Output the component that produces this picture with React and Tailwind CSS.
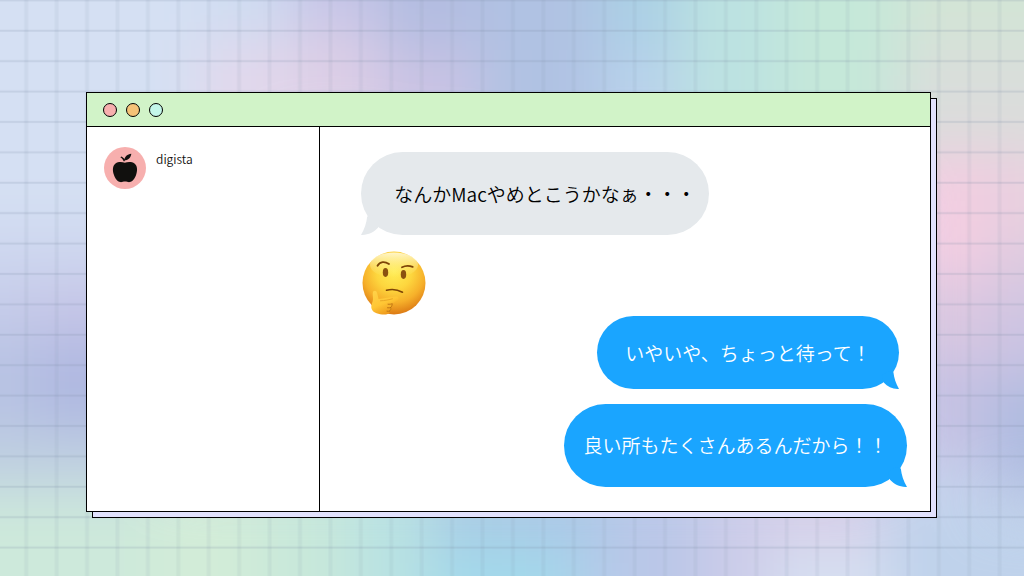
import clsx from 'clsx'

// x, y, width, height, colour of each soft patch
const patches = [
    [-100, -100, 320, 320, '#d5e0f3'],
    [200, -100, 90, 150, '#cfdcf1'],
    [200, 40, 90, 120, '#e2d8ec'],
    [290, -100, 90, 130, '#c5c5e7'],
    [290, 30, 100, 110, '#dccee6'],
    [380, -100, 100, 150, '#b3bde1'],
    [380, 50, 100, 100, '#cac3e4'],
    [480, -100, 120, 300, '#b0c2e3'],
    [600, -100, 80, 150, '#abd0e5'],
    [600, 50, 90, 100, '#b9d2ec'],
    [680, -100, 100, 300, '#bce2e1'],
    [780, -100, 120, 300, '#c5e8d9'],
    [900, -100, 250, 150, '#d3e4d6'],
    [900, 50, 250, 100, '#dadddb'],
    [900, 150, 90, 130, '#f3cde1'],
    [990, 150, 160, 90, '#e8d0df'],
    [990, 240, 160, 60, '#dac9e0'],
    [900, 280, 90, 80, '#dac7e0'],
    [990, 300, 160, 80, '#cac3e2'],
    [900, 360, 90, 100, '#c5c1e3'],
    [990, 380, 160, 110, '#aebbe0'],
    [880, 460, 110, 50, '#c6d2ec'],
    [880, 510, 270, 180, '#bfd2eb'],
    [-100, 220, 260, 60, '#ced7ef'],
    [-100, 280, 130, 60, '#c5cce9'],
    [30, 280, 130, 60, '#c5c5e7'],
    [-100, 340, 140, 90, '#b8c3e3'],
    [40, 340, 130, 100, '#afb8e1'],
    [-100, 430, 270, 60, '#bfcfe1'],
    [-100, 490, 250, 180, '#cde9db'],
    [150, 480, 110, 180, '#d2ecd8'],
    [260, 480, 90, 180, '#c8e8da'],
    [350, 480, 80, 180, '#b9e2e2'],
    [430, 480, 90, 65, '#a9cbe4'],
    [430, 545, 140, 120, '#a3d9eb'],
    [520, 480, 90, 65, '#abc7e6'],
    [570, 545, 70, 120, '#b0cdea'],
    [610, 480, 90, 180, '#bac7e8'],
    [700, 480, 70, 180, '#cccce9'],
    [770, 480, 110, 65, '#d7cee8'],
    [770, 545, 120, 120, '#d6dff1'],
]

const Backdrop = () => (
    <svg
        className="absolute inset-0 w-full h-full"
        viewBox="0 0 1024 576"
        preserveAspectRatio="xMidYMid slice"
        aria-hidden="true"
    >
        <defs>
            <filter id="soften" filterUnits="userSpaceOnUse" x="-100" y="-100" width="1224" height="776" colorInterpolationFilters="sRGB">
                <feGaussianBlur stdDeviation="27" />
            </filter>
            <pattern id="paper" x="11" y="15.2" width="30.42" height="30.4" patternUnits="userSpaceOnUse">
                <rect x="13.2" width="4" height="31" fill="#8593ad" opacity="0.1" />
                <rect y="14.5" width="31" height="2" fill="#7f8ba5" opacity="0.2" />
            </pattern>
        </defs>
        <rect width="1024" height="576" fill="#c6d3e8" />
        <g filter="url(#soften)">
            {patches.map(([x, y, w, h, fill]) => (
                <rect key={`${x}-${y}`} x={x} y={y} width={w + 1} height={h + 1} fill={fill} />
            ))}
        </g>
        <rect width="1024" height="576" fill="url(#paper)" />
    </svg>
)

const Apple = () => (
    <svg className="w-full h-full" viewBox="0 0 42 42" fill="#11100e" aria-hidden="true">
        <path d="M20.800 15.800c-2.600-1.200-6.800-1.300-9.300.7C8.600 18.800 8.300 23.200 9.800 27.500c1.300 3.800 3.400 7.300 6.500 7.600 1.800.2 2.900-.6 4.700-.6s2.900.8 4.700.6c3.100-.3 5.200-3.800 6.500-7.600 1.500-4.300 1.200-8.700-1.700-11-2.500-2-6.900-1.900-9.700-.7z" />
        <path d="M20 13.500c.6-3.800 3.400-6.400 7.300-6.800-.3 3.800-3 6.500-7.300 6.800z" />
        <path d="M16.300 10.300l1.200-.8c1.500.8 2.700 2 3.400 3.300l-.3 1.500h-1c-.6-1.800-1.600-3.100-3.300-4z" />
    </svg>
)

const ThinkingFace = () => (
    <svg className="w-16 h-16 ml-px mt-4" viewBox="0 0 64 64" role="img" aria-label="thinking face">
        <defs>
            <radialGradient id="face" cx="0.5" cy="0.32" r="0.7">
                <stop offset="0" stopColor="#ffed55" />
                <stop offset="0.4" stopColor="#fdd63e" />
                <stop offset="0.7" stopColor="#f6b02a" />
                <stop offset="1" stopColor="#d97412" />
            </radialGradient>
            <linearGradient id="shine" x1="0" y1="0" x2="0" y2="1">
                <stop offset="0" stopColor="#fff9da" stopOpacity="0.9" />
                <stop offset="1" stopColor="#fff27a" stopOpacity="0" />
            </linearGradient>
            <linearGradient id="hand" x1="0" y1="0" x2="0.5" y2="1">
                <stop offset="0" stopColor="#ffd34b" />
                <stop offset="0.6" stopColor="#ffc634" />
                <stop offset="1" stopColor="#ee9a1c" />
            </linearGradient>
        </defs>
        <circle cx="32" cy="32" r="31.500" fill="url(#face)" />
        <ellipse cx="32" cy="14" rx="24" ry="12.500" fill="url(#shine)" />
        <ellipse cx="23.500" cy="21.500" rx="2.700" ry="4.400" fill="#8a5210" />
        <ellipse cx="41.500" cy="23.500" rx="2.700" ry="4.400" fill="#8a5210" />
        <g fill="none" stroke="#7d4407" strokeLinecap="round">
            <path d="M15.500 14.700c2.500-4.500 7.500-4.400 11.500-1.600" strokeWidth="1.800" />
            <path d="M40 16.300c3.500-1.900 7.500-1.700 10.700-.4" strokeWidth="1.800" />
            <path d="M24.500 39.300c5-1.500 11-.8 16 1.900" strokeWidth="1.600" />
        </g>
        <path d="M11.500 40.300c1.500-1.300 3.100-.4 3.600 1.700l1.500 6c5.500-.2 12.300-1.900 17.500-2.400 2.600-.2 3.600 2.600 1.300 3.900l-6 3.500c1.500 1.200 1 2.800-.2 3.500.9 1.400.3 2.700-.9 3.300-.3 2.200-1.800 3.500-4.300 3.600-5.500.3-12.500-.6-14.300-5.400-1.200-3.300.9-6.300 1.300-9.600.3-2.700-1-6.900.5-8.100z" fill="url(#hand)" />
        <path d="M26 53.200c1.800.2 3.200 0 4.200-.6 0 1.800-.5 3-1.500 3.900.6 1.400.1 2.700-1 3.500M25.500 56.800c1.300.2 2.300.1 3.200-.3M25 60.200c1 .2 1.900.1 2.700-.2" fill="none" stroke="#b96f12" strokeWidth="0.900" strokeLinecap="round" />
        <path d="M18.500 49.800c4.500-.1 8.500-1.100 12-2" fill="none" stroke="#e59f22" strokeWidth="0.800" strokeLinecap="round" />
    </svg>
)

const Tail = ({ className }) => (
    <svg className={clsx('absolute bottom-0 fill-current', className)} viewBox="0 0 20 20" aria-hidden="true">
        <path d="M13.800 1.500C14.500 8 16.500 14 20 20C13 20.200 7.500 17.500 3 12.800L1 5L8 0Z" />
    </svg>
)

const Bubble = ({ children, tail, className, textClassName }) => (
    <div className={clsx('relative max-w-full rounded-full flex items-center justify-center', className)}>
        <Tail className={tail} />
        <p className={clsx('relative text-[19px] leading-7 font-[350] whitespace-nowrap', textClassName)}>{children}</p>
    </div>
)

const windowButtons = [
    { label: 'Close', color: 'bg-[#f7afae]' },
    { label: 'Minimize', color: 'bg-[#f5c277]' },
    { label: 'Maximize', color: 'bg-[#c3f6e9]' },
]

const App = () => {
    return (
        <div className="relative min-h-screen overflow-hidden font-['Noto_Sans_CJK_JP',sans-serif]">
            <Backdrop />
            <main className="relative pl-[86px] pr-[93px] pt-[92px] pb-16">
                <section className="flex flex-col border border-black bg-white shadow-[6px_6px_0_-1px_#e1e1fc,6px_6px_0_0_#000]">
                    <header className="flex items-center gap-[9px] h-[34px] px-4 border-b border-black bg-[#d1f3c8]">
                        {windowButtons.map(({ label, color }) => (
                            <button
                                key={label}
                                type="button"
                                aria-label={label}
                                className={clsx('w-3.5 h-3.5 rounded-full border border-black', color)}
                            />
                        ))}
                    </header>
                    <div className="flex">
                        <aside className="w-[233px] shrink-0 border-r border-black pt-5 pl-[17px]">
                            <div className="flex items-start gap-2.5">
                                <div className="w-[42px] h-[42px] rounded-full bg-[#f7afae]">
                                    <Apple />
                                </div>
                                <span className="text-xs leading-6 font-[350] text-[#11100e]">digista</span>
                            </div>
                        </aside>
                        <div className="flex-1 min-w-0 flex flex-col items-start pt-[25px] pb-6 pl-[41px] pr-[23px]">
                            <Bubble
                                className="w-[348px] h-[83px] bg-[#e5e9ec] text-[#e5e9ec]"
                                tail="left-0 w-5 h-5 -scale-x-100"
                                textClassName="pl-5 text-black"
                            >
                                なんかMacやめとこうかなぁ・・・
                            </Bubble>
                            <ThinkingFace />
                            <Bubble
                                className="w-[302px] h-[73px] self-end mr-2 mt-px bg-[#1aa5ff] text-[#1aa5ff]"
                                tail="right-0 w-[18px] h-[18px]"
                                textClassName="text-white"
                            >
                                いやいや、ちょっと待って！
                            </Bubble>
                            <Bubble
                                className="w-[343px] h-[83px] self-end mt-[15px] bg-[#1aa5ff] text-[#1aa5ff]"
                                tail="right-0 w-5 h-5"
                                textClassName="pb-0.5 text-white"
                            >
                                良い所もたくさんあるんだから！！
                            </Bubble>
                        </div>
                    </div>
                </section>
            </main>
        </div>
    )
}

export default App
